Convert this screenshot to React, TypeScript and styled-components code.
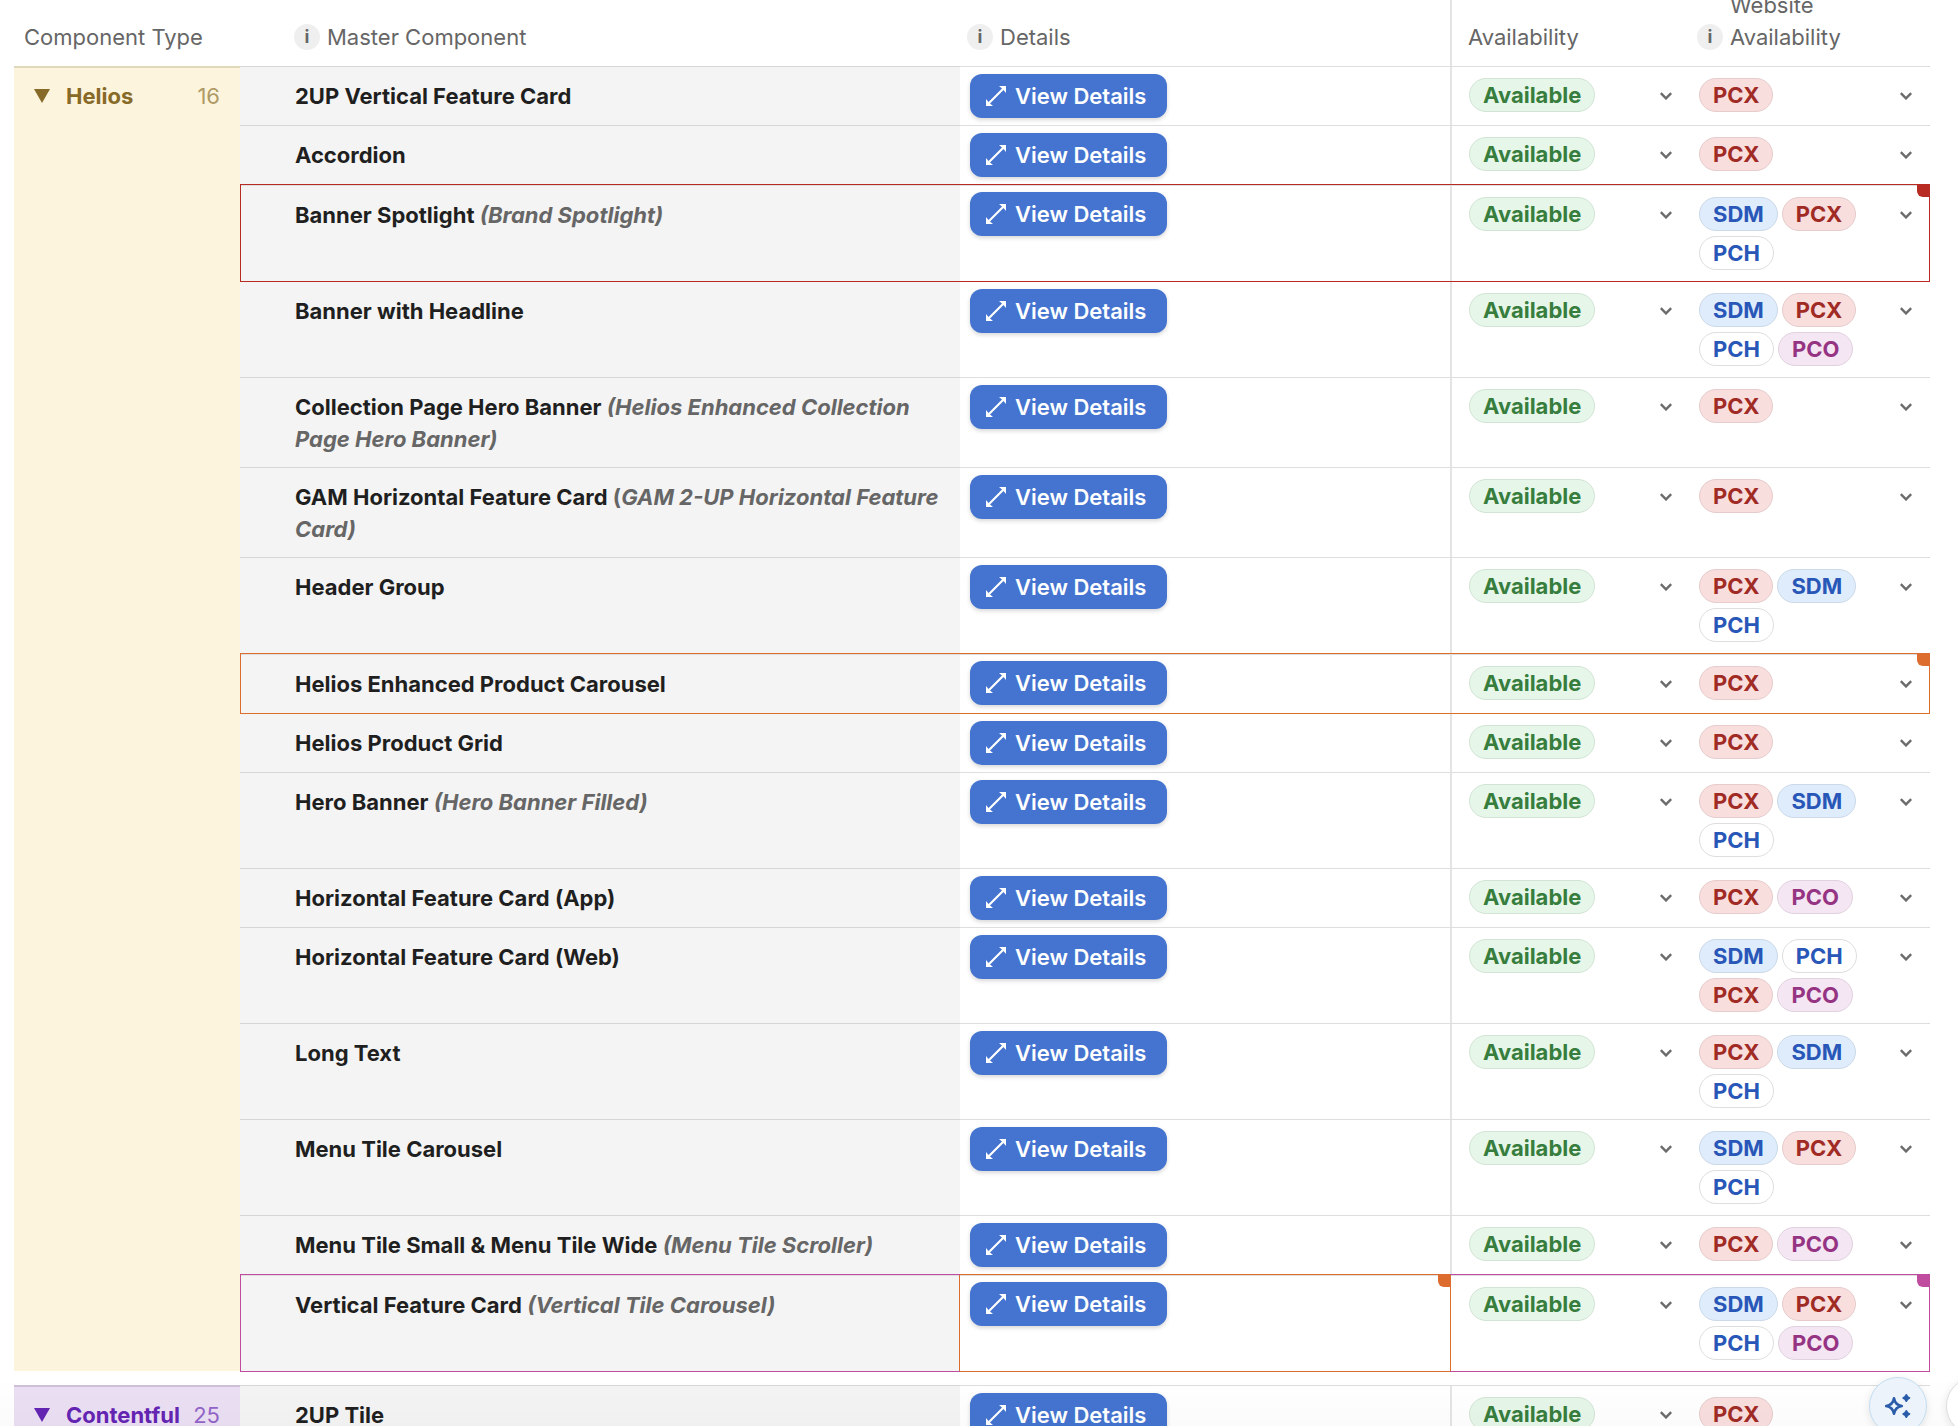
import React from "react";
import styled, { createGlobalStyle, css } from "styled-components";

const GlobalStyle = createGlobalStyle`
  *, *::before, *::after { box-sizing: border-box; }
  body {
    margin: 0;
    background: #fff;
    color: #1f1f1f;
    font-family: Inter, "Liberation Sans", sans-serif;
    font-size: 22px;
    line-height: 32px;
  }
  button { font: inherit; cursor: pointer; }
`;

const RED = "#b82b22";
const ORANGE = "#dc6d2e";
const PINK = "#c04ca0";
const LINE = "#dedede";
const DIVIDER = "#e4e4e4";

const Page = styled.main`
  position: relative;
  height: 100vh;
  overflow: hidden;
  padding: 0 28px 0 14px;
`;

const Table = styled.table`
  width: 100%;
  table-layout: fixed;
  border-collapse: separate;
  border-spacing: 0;
`;

const Col = styled.col<{ $width?: number }>`
  ${(p) => p.$width && css`width: ${p.$width}px;`}
`;

const HeadCell = styled.th<{ $indent: number; $divided?: boolean }>`
  padding: 21px 0 13px ${(p) => p.$indent}px;
  text-align: left;
  font-weight: 400;
  color: #666;
  ${(p) => p.$divided && css`box-shadow: inset 2px 0 ${DIVIDER};`}
`;

const HeadLabel = styled.div`
  display: flex;
  align-items: flex-end;
  gap: 7px;
  height: 32px;
`;

const InfoDot = styled.button`
  display: flex;
  align-items: center;
  justify-content: center;
  width: 26px;
  height: 26px;
  margin-bottom: 3px;
  padding: 0;
  border: 0;
  border-radius: 50%;
  background: #efefef;
  color: #666;
  font-size: 18px;
  font-weight: 700;
  line-height: 26px;
`;

const GroupCell = styled.th<{ $bg: string; $fg: string; $line: string }>`
  padding: 12px 20px 0;
  border-top: 2px solid ${(p) => p.$line};
  background: ${(p) => p.$bg};
  color: ${(p) => p.$fg};
  text-align: left;
  vertical-align: top;
`;

const GroupHead = styled.div`
  display: flex;
  align-items: center;
`;

const GroupToggle = styled.button`
  display: flex;
  align-items: center;
  flex: 1;
  gap: 16px;
  padding: 0;
  border: 0;
  background: none;
  color: inherit;
  font-weight: 700;
`;

const GroupCount = styled.span`
  font-weight: 400;
  opacity: 0.65;
`;

type Edges = { $top?: string; $left?: string; $right?: string; $marked?: boolean };

const edgeShadow = (p: Edges) =>
  [
    p.$left && `inset 1px 0 ${p.$left}`,
    p.$right && `inset -1px 0 ${p.$right}`,
    p.$marked && `inset 0 1px ${LINE}`,
  ]
    .filter(Boolean)
    .join(", ") || "none";

const Cell = styled.td<Edges>`
  position: relative;
  padding: ${(p) => (p.$marked ? 12 : 11)}px 0 11px;
  border-top: 1px solid ${(p) => p.$top || LINE};
  box-shadow: ${edgeShadow};
  vertical-align: top;
`;

const NameCell = styled(Cell)`
  padding: ${(p) => (p.$marked ? 14 : 13)}px 20px 12px 55px;
  background: #f4f4f4;
  border-top-color: ${(p) => p.$top || "#d6d6d6"};
  font-weight: 700;
`;

const Alias = styled.em`
  color: #666;
`;

const DetailsCell = styled(Cell)`
  padding: 7px 0 ${(p) => (p.$marked ? 8 : 7)}px 10px;
`;

const AvailabilityCell = styled(Cell)`
  padding-left: 19px;
  padding-right: 15px;
  ${(p) => !p.$left && css`box-shadow: inset 2px 0 ${DIVIDER}, ${edgeShadow({ $marked: p.$marked }) === "none" ? "inset 0 0 transparent" : edgeShadow({ $marked: p.$marked })};`}
`;

const SitesCell = styled(Cell)`
  padding-left: 9px;
  padding-right: 15px;
`;

const GapCell = styled.td<{ $top?: string }>`
  height: 14px;
  padding: 0;
  border-top: 1px solid ${(p) => p.$top || "transparent"};
`;

const Flag = styled.span<{ $color: string; $overlap?: boolean }>`
  position: absolute;
  z-index: 1;
  top: 0;
  right: ${(p) => (p.$overlap ? -1 : 0)}px;
  width: 13px;
  height: 12px;
  border-bottom-left-radius: 6px;
  background: ${(p) => p.$color};
`;

const ViewButton = styled.button`
  display: flex;
  align-items: center;
  gap: 9px;
  height: 44px;
  padding: 0 21px 0 16px;
  border: 0;
  border-radius: 12px;
  background: #4474d0;
  box-shadow: 0 2px 4px rgba(0, 0, 0, 0.16);
  color: #fff;
  font-weight: 600;
`;

const Picker = styled.div`
  display: flex;
  align-items: flex-start;
  justify-content: space-between;
`;

const Pills = styled.div`
  display: flex;
  flex-wrap: wrap;
  gap: 5px 4px;
`;

const tones = {
  green: ["#e6f7e9", "#377d3d", "#d2e4d5"],
  red: ["#f9dede", "#a02b25", "#e6cccc"],
  blue: ["#dfecfc", "#2857b8", "#cbd9e8"],
  white: ["#ffffff", "#2857b8", "#dedede"],
  purple: ["#f4e6f2", "#963484", "#e0d2de"],
};
type Tone = keyof typeof tones;

const Pill = styled.span<{ $tone: Tone }>`
  height: 34px;
  padding: 0 13px;
  border: 1px solid ${(p) => tones[p.$tone][2]};
  border-radius: 17px;
  background: ${(p) => tones[p.$tone][0]};
  color: ${(p) => tones[p.$tone][1]};
  font-weight: 700;
`;

const OpenButton = styled.button`
  display: flex;
  align-items: center;
  justify-content: center;
  flex: none;
  width: 18px;
  height: 36px;
  padding: 0;
  border: 0;
  background: none;
  color: #6b6b6b;
`;

const BottomShade = styled.div`
  position: absolute;
  left: 0;
  right: 0;
  bottom: 0;
  height: 50px;
  background: linear-gradient(rgba(0, 0, 0, 0), rgba(0, 0, 0, 0.015));
  pointer-events: none;
`;

const FloatingBar = styled.div`
  position: absolute;
  left: calc(100% - 89px);
  bottom: -9px;
  display: flex;
  gap: 19px;
`;

const RoundButton = styled.button<{ $accent?: boolean }>`
  display: flex;
  align-items: center;
  justify-content: center;
  flex: none;
  width: 58px;
  height: 58px;
  padding: 0;
  border: 1px solid ${(p) => (p.$accent ? "#c4def3" : "#dedede")};
  border-radius: 50%;
  background: ${(p) => (p.$accent ? "#ecf3fa" : "#fff")};
  box-shadow: 0 2px 8px rgba(0, 0, 0, 0.1);
  color: #2a5caa;
`;

const ExpandIcon = () => (
  <svg width="20" height="20" viewBox="0 0 20 20" fill="currentColor" aria-hidden="true">
    <path d="M13 0h7v7l-2.500-3L4 17.500 7 20H0v-7l2.500 3L16 2.500z" />
  </svg>
);

const ChevronIcon = () => (
  <svg width="12" height="8" viewBox="0 0 12 8" fill="none" aria-hidden="true">
    <path d="M.8 1.200 6 6.400 11.200 1.200" stroke="currentColor" strokeWidth="2.4" />
  </svg>
);

const TriangleIcon = () => (
  <svg width="16" height="14" viewBox="0 0 16 14" fill="currentColor" aria-hidden="true">
    <path d="M0 0h16L8 14z" />
  </svg>
);

const SparkleIcon = () => (
  <svg width="26" height="26" viewBox="0 0 26 26" fill="none" stroke="currentColor" strokeLinejoin="round" aria-hidden="true">
    <path
      d="M9 5.200C9.700 9.500 12.500 12.300 16.800 13 12.500 13.700 9.700 16.500 9 20.800 8.300 16.500 5.500 13.700 1.200 13 5.500 12.300 8.300 9.500 9 5.200Z"
      strokeWidth="2.6"
    />
    <path
      d="M21.300 2 22.400 3.900 24.300 5 22.400 6.100 21.300 8 20.200 6.100 18.300 5 20.200 3.900ZM21.300 18 22.400 19.900 24.300 21 22.400 22.100 21.300 24 20.200 22.100 18.300 21 20.200 19.900Z"
      fill="currentColor"
      strokeWidth="2"
    />
  </svg>
);

const siteTone: Record<string, Tone> = { SDM: "blue", PCX: "red", PCH: "white", PCO: "purple" };

type RowData = {
  name: string;
  alias?: string;
  sites: string[];
  mark?: string;
  detailsMark?: string;
  plainParen?: boolean;
};

type Group = {
  title: string;
  count: number;
  colors: { bg: string; fg: string; line: string };
  rows: RowData[];
};

const groups: Group[] = [
  {
    title: "Helios",
    count: 16,
    colors: { bg: "#fcf4dc", fg: "#876a27", line: "#e0d8ba" },
    rows: [
      { name: "2UP Vertical Feature Card", sites: ["PCX"] },
      { name: "Accordion", sites: ["PCX"] },
      { name: "Banner Spotlight", alias: "Brand Spotlight)", sites: ["SDM", "PCX", "PCH"], mark: RED },
      { name: "Banner with Headline", sites: ["SDM", "PCX", "PCH", "PCO"] },
      {
        name: "Collection Page Hero Banner",
        alias: "Helios Enhanced Collection Page Hero Banner)",
        sites: ["PCX"],
      },
      {
        name: "GAM Horizontal Feature Card",
        alias: "GAM 2-UP Horizontal Feature Card)",
        plainParen: true,
        sites: ["PCX"],
      },
      { name: "Header Group", sites: ["PCX", "SDM", "PCH"] },
      { name: "Helios Enhanced Product Carousel", sites: ["PCX"], mark: ORANGE },
      { name: "Helios Product Grid", sites: ["PCX"] },
      { name: "Hero Banner", alias: "Hero Banner Filled)", sites: ["PCX", "SDM", "PCH"] },
      { name: "Horizontal Feature Card (App)", sites: ["PCX", "PCO"] },
      { name: "Horizontal Feature Card (Web)", sites: ["SDM", "PCH", "PCX", "PCO"] },
      { name: "Long Text", sites: ["PCX", "SDM", "PCH"] },
      { name: "Menu Tile Carousel", sites: ["SDM", "PCX", "PCH"] },
      { name: "Menu Tile Small & Menu Tile Wide", alias: "Menu Tile Scroller)", sites: ["PCX", "PCO"] },
      {
        name: "Vertical Feature Card",
        alias: "Vertical Tile Carousel)",
        sites: ["SDM", "PCX", "PCH", "PCO"],
        mark: PINK,
        detailsMark: ORANGE,
      },
    ],
  },
  {
    title: "Contentful",
    count: 25,
    colors: { bg: "#ebdff3", fg: "#6424b4", line: "#cdc0d8" },
    rows: [{ name: "2UP Tile", sites: ["PCX"] }],
  },
];

function ComponentRow({ row, prev, lead }: { row: RowData; prev?: RowData; lead?: React.ReactNode }) {
  const top = row.mark || prev?.mark;
  const marked = !!row.mark;
  const { detailsMark } = row;
  return (
    <tr>
      {lead}
      <NameCell $top={top} $marked={marked} $left={row.mark} $right={detailsMark}>
        {row.name}
        {row.alias && (
          <>
            {" "}
            {row.plainParen && <Alias as="span">(</Alias>}
            <Alias>
              {!row.plainParen && "("}
              {row.alias}
            </Alias>
          </>
        )}
      </NameCell>
      <DetailsCell $top={detailsMark || top} $marked={marked}>
        <ViewButton type="button">
          <ExpandIcon />
          View Details
        </ViewButton>
        {detailsMark && <Flag $color={detailsMark} $overlap />}
      </DetailsCell>
      <AvailabilityCell $top={top} $marked={marked} $left={detailsMark}>
        <Picker>
          <Pill $tone="green">Available</Pill>
          <OpenButton type="button" aria-label="Change availability" aria-haspopup="listbox">
            <ChevronIcon />
          </OpenButton>
        </Picker>
      </AvailabilityCell>
      <SitesCell $top={top} $marked={marked} $right={row.mark}>
        <Picker>
          <Pills>
            {row.sites.map((site) => (
              <Pill key={site} $tone={siteTone[site]}>
                {site}
              </Pill>
            ))}
          </Pills>
          <OpenButton type="button" aria-label="Change website availability" aria-haspopup="listbox">
            <ChevronIcon />
          </OpenButton>
        </Picker>
        {row.mark && <Flag $color={row.mark} />}
      </SitesCell>
    </tr>
  );
}

function GroupGap({ last }: { last: RowData }) {
  return (
    <tr>
      <GapCell />
      <GapCell $top={last.mark} />
      <GapCell $top={last.detailsMark || last.mark} />
      <GapCell $top={last.mark} />
      <GapCell $top={last.mark} />
    </tr>
  );
}

function Info({ about }: { about: string }) {
  return (
    <InfoDot type="button" aria-label={`About ${about}`}>
      i
    </InfoDot>
  );
}

export default function App() {
  return (
    <Page>
      <GlobalStyle />
      <Table>
        <colgroup>
          <Col $width={226} />
          <Col />
          <Col $width={490} />
          <Col $width={240} />
          <Col $width={240} />
        </colgroup>
        <thead>
          <tr>
            <HeadCell $indent={10}>
              <HeadLabel>Component Type</HeadLabel>
            </HeadCell>
            <HeadCell $indent={54}>
              <HeadLabel>
                <Info about="Master Component" />
                Master Component
              </HeadLabel>
            </HeadCell>
            <HeadCell $indent={7}>
              <HeadLabel>
                <Info about="Details" />
                Details
              </HeadLabel>
            </HeadCell>
            <HeadCell $indent={18} $divided>
              <HeadLabel>Availability</HeadLabel>
            </HeadCell>
            <HeadCell $indent={7}>
              <HeadLabel>
                <Info about="Website Availability" />
                <span>
                  Website
                  <br />
                  Availability
                </span>
              </HeadLabel>
            </HeadCell>
          </tr>
        </thead>
        {groups.map((group, g) => (
          <tbody key={group.title}>
            {group.rows.map((row, i) => (
              <ComponentRow
                key={row.name}
                row={row}
                prev={group.rows[i - 1]}
                lead={
                  i === 0 && (
                    <GroupCell
                      scope="rowgroup"
                      rowSpan={group.rows.length}
                      $bg={group.colors.bg}
                      $fg={group.colors.fg}
                      $line={group.colors.line}
                    >
                      <GroupHead>
                        <GroupToggle type="button" aria-expanded="true">
                          <TriangleIcon />
                          {group.title}
                        </GroupToggle>
                        <GroupCount>{group.count}</GroupCount>
                      </GroupHead>
                    </GroupCell>
                  )
                }
              />
            ))}
            {g < groups.length - 1 && <GroupGap last={group.rows[group.rows.length - 1]} />}
          </tbody>
        ))}
      </Table>
      <BottomShade />
      <FloatingBar>
        <RoundButton type="button" $accent aria-label="Assistant">
          <SparkleIcon />
        </RoundButton>
        <RoundButton type="button" aria-label="Help" />
      </FloatingBar>
    </Page>
  );
}
